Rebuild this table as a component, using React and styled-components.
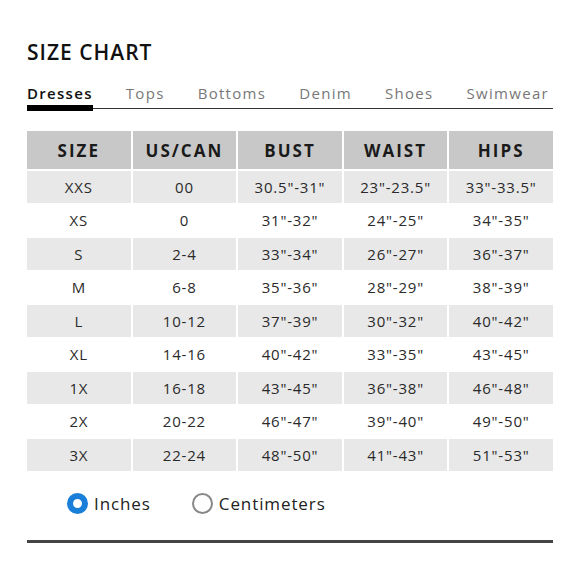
import React, { useState } from 'react';
import styled, { createGlobalStyle } from 'styled-components';

const GlobalStyle = createGlobalStyle`
  body {
    margin: 0;
    background: #fff;
    font-family: "Open Sans", "DejaVu Sans", sans-serif;
    color: #222;
  }
`;

const tabs = ['Dresses', 'Tops', 'Bottoms', 'Denim', 'Shoes', 'Swimwear'];
const headers = ['SIZE', 'US/CAN', 'BUST', 'WAIST', 'HIPS'];
const rows = [
  ['XXS', '00', '30.5"-31"', '23"-23.5"', '33"-33.5"'],
  ['XS', '0', '31"-32"', '24"-25"', '34"-35"'],
  ['S', '2-4', '33"-34"', '26"-27"', '36"-37"'],
  ['M', '6-8', '35"-36"', '28"-29"', '38"-39"'],
  ['L', '10-12', '37"-39"', '30"-32"', '40"-42"'],
  ['XL', '14-16', '40"-42"', '33"-35"', '43"-45"'],
  ['1X', '16-18', '43"-45"', '36"-38"', '46"-48"'],
  ['2X', '20-22', '46"-47"', '39"-40"', '49"-50"'],
  ['3X', '22-24', '48"-50"', '41"-43"', '51"-53"'],
];

const App = () => {
  const [activeTab, setActiveTab] = useState('Dresses');
  const [unit, setUnit] = useState('in');

  return (
    <>
      <GlobalStyle />
      <Page>
        <Title>SIZE CHART</Title>
        <TabBar>
          {tabs.map(tab => (
            <Tab key={tab} $active={tab === activeTab} onClick={() => setActiveTab(tab)}>
              {tab}
            </Tab>
          ))}
        </TabBar>
        <Chart>
          {headers.map(h => (
            <HeadCell key={h}>{h}</HeadCell>
          ))}
          {rows.map((row, i) =>
            row.map((cell, j) => (
              <Cell key={`${i}-${j}`} $shaded={i % 2 === 0}>{cell}</Cell>
            ))
          )}
        </Chart>
        <UnitRow>
          <UnitOption onClick={() => setUnit('in')}>
            <Radio $checked={unit === 'in'} />
            Inches
          </UnitOption>
          <UnitOption onClick={() => setUnit('cm')}>
            <Radio $checked={unit === 'cm'} />
            Centimeters
          </UnitOption>
        </UnitRow>
        <Divider />
      </Page>
    </>
  );
};

export default App;

const Page = styled.div`
  width: 526px;
  padding: 40px 0 0 27px;
`;

const Title = styled.h1`
  margin: 0;
  font-size: 21px;
  line-height: 25px;
  font-weight: 600;
  color: #111;
  letter-spacing: 1px;
`;

const TabBar = styled.div`
  display: flex;
  justify-content: space-between;
  margin-top: 19px;
  border-bottom: 1.5px solid #333;
  padding-right: 4px;
`;

const Tab = styled.div`
  font-size: 15px;
  line-height: 18px;
  letter-spacing: 1.3px;
  font-weight: ${p => (p.$active ? 600 : 500)};
  color: ${p => (p.$active ? '#111' : '#777')};
  padding-bottom: 3px;
  border-bottom: 6px solid ${p => (p.$active ? '#000' : 'transparent')};
  margin-bottom: -3px;
  cursor: pointer;
`;

const Chart = styled.div`
  display: grid;
  grid-template-columns: repeat(5, 1fr);
  grid-template-rows: 38px;
  grid-auto-rows: 31.5px;
  gap: 2px;
  margin-top: 22px;
`;

const HeadCell = styled.div`
  display: flex;
  align-items: center;
  justify-content: center;
  background: #c8c8c8;
  font-size: 17px;
  font-weight: 700;
  letter-spacing: 2px;
  color: #1a1a1a;
`;

const Cell = styled.div`
  display: flex;
  align-items: center;
  justify-content: center;
  background: ${p => (p.$shaded ? '#e8e8e8' : '#fff')};
  font-size: 15px;
  letter-spacing: 0.8px;
  color: #2a2a2a;
`;

const UnitRow = styled.div`
  display: flex;
  align-items: center;
  gap: 41px;
  padding-left: 40px;
  margin-top: 21px;
`;

const UnitOption = styled.label`
  display: flex;
  align-items: center;
  gap: 6px;
  font-size: 17px;
  letter-spacing: 0.9px;
  color: #222;
  cursor: pointer;
`;

const Radio = styled.span`
  box-sizing: border-box;
  width: 21px;
  height: 21px;
  border-radius: 50%;
  border: ${p => (p.$checked ? '6px solid #1a7fd9' : '2px solid #888')};
  background: #fff;
`;

const Divider = styled.div`
  height: 3px;
  background: #444;
  margin-top: 25px;
`;
